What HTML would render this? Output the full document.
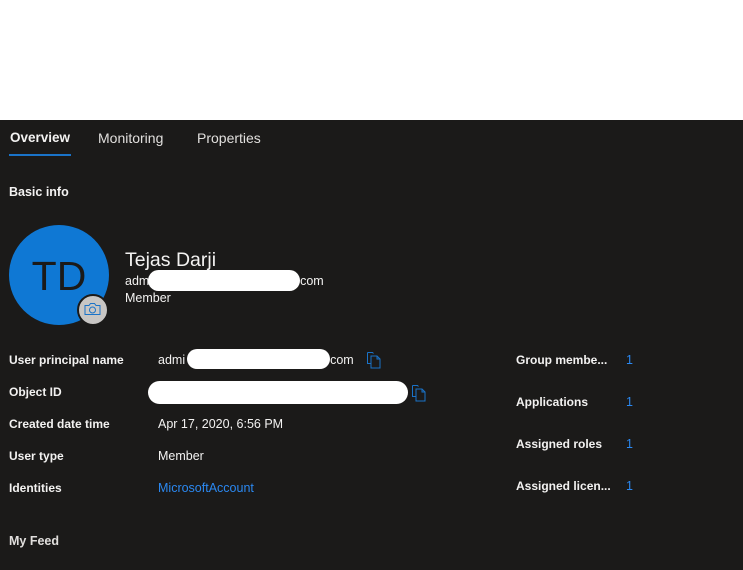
<!DOCTYPE html>
<html><head><meta charset="utf-8"><style>
html,body{margin:0;padding:0;width:743px;height:570px;overflow:hidden;background:#fff;font-family:"Liberation Sans",sans-serif;}
.p{position:absolute;left:0;top:120px;width:743px;height:450px;background:#1b1a19;}
.t{position:absolute;white-space:nowrap;line-height:16px;color:#f3f2f1;font-size:12.5px;}
.b{font-weight:bold;font-size:12px;}
.lnk{color:#2b88f0;}
.blob{position:absolute;background:#fff;border-radius:12px;}
</style></head><body>
<div class="p"></div>
<div class="t" style="left:10px;top:130px;font-size:13.5px;font-weight:bold;">Overview</div>
<div class="t" style="left:98px;top:130px;font-size:14px;color:#e1dfdd">Monitoring</div>
<div class="t" style="left:197px;top:130px;font-size:14px;color:#e1dfdd">Properties</div>
<div style="position:absolute;left:9px;top:154px;width:62px;height:2px;background:#1a73c8"></div>
<div class="t b" style="left:9px;top:184px;font-size:12.5px">Basic info</div>

<div style="position:absolute;left:9px;top:225px;width:100px;height:100px;border-radius:50%;background:#0f78d4;"></div>
<div class="t" style="left:9px;top:254px;width:100px;text-align:center;font-size:41px;line-height:44px;color:#1b1a19;">TD</div>
<div style="position:absolute;left:77px;top:294px;width:28px;height:28px;border-radius:50%;background:#c8c6c4;border:2px solid #1b1a19;"></div>
<svg style="position:absolute;left:84px;top:302px" width="17" height="14" viewBox="0 0 17 14"><path d="M1 3.5h4l1.5-2h4l1.5 2h4v9h-15z" fill="none" stroke="#1a73c8" stroke-width="1"/><circle cx="8.5" cy="8" r="3" fill="none" stroke="#1a73c8"/></svg>

<div class="t" style="left:125px;top:248px;font-size:19.5px;line-height:24px">Tejas Darji</div>
<div class="t" style="left:125px;top:273px">admi<span style="margin-left:148px">com</span></div>
<div class="blob" style="left:148px;top:270px;width:152px;height:21px"></div>
<div class="t" style="left:125px;top:290px">Member</div>

<div class="t b" style="left:9px;top:352px">User principal name</div>
<div class="t" style="left:158px;top:352px">admi<span style="margin-left:145px">com</span></div>
<div class="blob" style="left:187px;top:349px;width:143px;height:20px"></div>
<svg style="position:absolute;left:366px;top:351px" width="16" height="18" viewBox="0 0 16 18"><path d="M1.5 1.5h5l1 1M1.5 1.5v11h3" fill="none" stroke="#1a73c8"/><path d="M5 5h6l3 3v9H5z M11 5v3h3" fill="none" stroke="#1a73c8"/></svg>

<div class="t b" style="left:9px;top:384px">Object ID</div>
<div class="blob" style="left:148px;top:381px;width:260px;height:23px"></div>
<svg style="position:absolute;left:411px;top:384px" width="16" height="18" viewBox="0 0 16 18"><path d="M1.5 1.5h5l1 1M1.5 1.5v11h3" fill="none" stroke="#1a73c8"/><path d="M5 5h6l3 3v9H5z M11 5v3h3" fill="none" stroke="#1a73c8"/></svg>

<div class="t b" style="left:9px;top:416px">Created date time</div>
<div class="t" style="left:158px;top:416px">Apr 17, 2020, 6:56 PM</div>
<div class="t b" style="left:9px;top:448px">User type</div>
<div class="t" style="left:158px;top:448px">Member</div>
<div class="t b" style="left:9px;top:480px">Identities</div>
<div class="t lnk" style="left:158px;top:480px">MicrosoftAccount</div>

<div class="t b" style="left:516px;top:352px">Group membe...</div>
<div class="t lnk" style="left:626px;top:352px">1</div>
<div class="t b" style="left:516px;top:394px">Applications</div>
<div class="t lnk" style="left:626px;top:394px">1</div>
<div class="t b" style="left:516px;top:436px">Assigned roles</div>
<div class="t lnk" style="left:626px;top:436px">1</div>
<div class="t b" style="left:516px;top:478px">Assigned licen...</div>
<div class="t lnk" style="left:626px;top:478px">1</div>

<div class="t b" style="left:9px;top:533px;font-size:12.5px;color:#e1dfdd">My Feed</div>
</body></html>
